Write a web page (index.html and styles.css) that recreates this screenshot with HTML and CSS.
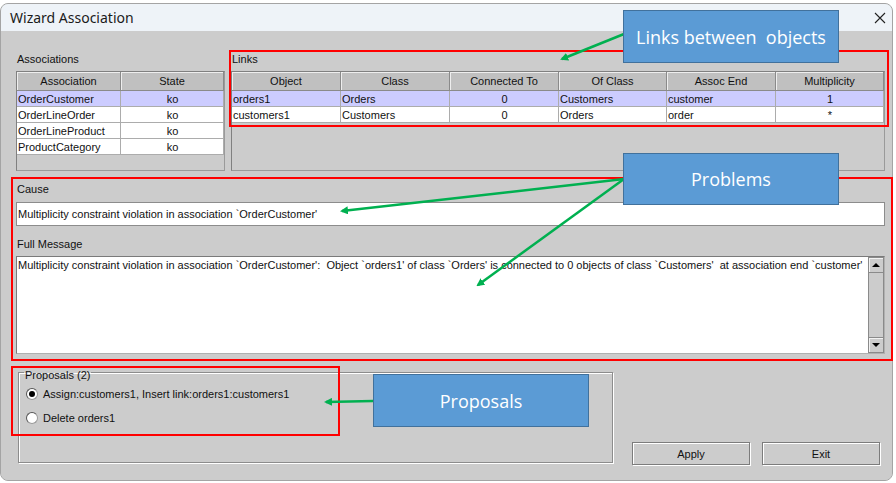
FILE: index.html
```html
<!DOCTYPE html>
<html>
<head>
<meta charset="utf-8">
<title>Wizard Association</title>
<link rel="stylesheet" href="styles.css">
</head>
<body>
<div class="window">
  <div class="titlebar">
    <span class="title">Wizard Association</span>
    <svg class="close" viewBox="0 0 12 12" width="12" height="12"><path d="M1 1 L11 11 M11 1 L1 11" stroke="#222" stroke-width="1.1" fill="none"/></svg>
  </div>
  <div class="content">
    <div class="top">
      <section class="panel">
        <div class="label">Associations</div>
        <div class="pane">
          <table class="grid">
            <colgroup><col style="width:104px"><col style="width:103px"></colgroup>
            <thead><tr><th>Association</th><th>State</th></tr></thead>
            <tbody>
              <tr class="sel"><td>OrderCustomer</td><td class="c">ko</td></tr>
              <tr><td>OrderLineOrder</td><td class="c">ko</td></tr>
              <tr><td>OrderLineProduct</td><td class="c">ko</td></tr>
              <tr><td>ProductCategory</td><td class="c">ko</td></tr>
            </tbody>
          </table>
        </div>
      </section>
      <section class="panel">
        <div class="label">Links</div>
        <div class="pane">
          <table class="grid">
            <colgroup><col style="width:109px"><col style="width:109px"><col style="width:109px"><col style="width:108px"><col style="width:109px"><col style="width:108px"></colgroup>
            <thead><tr><th>Object</th><th>Class</th><th>Connected To</th><th>Of Class</th><th>Assoc End</th><th>Multiplicity</th></tr></thead>
            <tbody>
              <tr class="sel"><td>orders1</td><td>Orders</td><td class="c">0</td><td>Customers</td><td>customer</td><td class="c">1</td></tr>
              <tr><td>customers1</td><td>Customers</td><td class="c">0</td><td>Orders</td><td>order</td><td class="c">*</td></tr>
            </tbody>
          </table>
        </div>
      </section>
    </div>

    <div class="label gap-label">Cause</div>
    <div class="field">Multiplicity constraint violation in association `OrderCustomer'</div>

    <div class="label gap-label">Full Message</div>
    <div class="textarea">
      <div class="msg">Multiplicity constraint violation in association `OrderCustomer':  Object `orders1' of class `Orders' is connected to 0 objects of class `Customers'  at association end `customer'</div>
      <div class="vscroll">
        <div class="sb-btn"><span class="tri up"></span></div>
        <div class="sb-track"></div>
        <div class="sb-btn"><span class="tri down"></span></div>
      </div>
    </div>

    <div class="bottom">
      <fieldset class="proposals">
        <legend>Proposals (2)</legend>
        <div class="radio first"><span class="dot on"></span>Assign:customers1, Insert link:orders1:customers1</div>
        <div class="radio"><span class="dot"></span>Delete orders1</div>
      </fieldset>
      <div class="buttons">
        <button class="btn">Apply</button>
        <button class="btn">Exit</button>
      </div>
    </div>
  </div>
</div>

<div class="mark mark-links"></div>
<div class="mark mark-problems"></div>
<div class="mark mark-proposals"></div>

<svg class="arrows" width="896" height="483" viewBox="0 0 896 483">
  <defs>
    <marker id="ah" markerWidth="8" markerHeight="8" refX="6" refY="4" orient="auto" markerUnits="userSpaceOnUse">
      <path d="M0 0 L8 4 L0 8 Z" fill="#00b050"/>
    </marker>
  </defs>
  <g stroke="#00b050" stroke-width="2.5" fill="none">
    <line x1="624" y1="34" x2="562" y2="59" marker-end="url(#ah)"/>
    <line x1="624" y1="179" x2="342" y2="211" marker-end="url(#ah)"/>
    <line x1="624" y1="179" x2="478" y2="285" marker-end="url(#ah)"/>
    <line x1="373" y1="401" x2="326" y2="402" marker-end="url(#ah)"/>
  </g>
</svg>

<div class="callout c-links">Links between&nbsp; objects</div>
<div class="callout c-problems">Problems</div>
<div class="callout c-proposals">Proposals</div>
</body>
</html>
```

FILE: styles.css
```css
* { box-sizing: border-box; }
html, body { margin: 0; padding: 0; }
body {
  width: 896px;
  height: 483px;
  position: relative;
  overflow: hidden;
  background: #ffffff;
  font-family: "Liberation Sans", Arial, sans-serif;
  font-size: 11px;
  color: #111;
}

.window {
  margin-top: 3px;
  width: 893px;
  height: 478px;
  border: 1px solid #a4a4a4;
  border-radius: 8px;
  overflow: hidden;
  display: flex;
  flex-direction: column;
  background: #cccccc;
}
.titlebar {
  flex: none;
  height: 27px;
  background: #eef3f8;
  display: flex;
  align-items: center;
  justify-content: space-between;
  padding: 0 6px 0 9px;
}
.title {
  font-family: "Noto Sans", "Open Sans", sans-serif;
  font-size: 14px;
  color: #1b1b1b;
}
.close { display: block; }

.content {
  flex: 1;
  background: #cccccc;
  padding: 21px 7px 0 15px;
}
.top {
  display: grid;
  grid-template-columns: 209px 654px;
  column-gap: 6px;
}
.label {
  height: 14px;
  line-height: 14px;
  padding-left: 1px;
}
.pane {
  margin-top: 5px;
  height: 100px;
  border: 1px solid #808080;
  border-right-color: #9a9a9a;
  border-bottom-color: #9a9a9a;
  background: #cccccc;
  overflow: hidden;
}

table.grid {
  border-collapse: separate;
  border-spacing: 0;
  table-layout: fixed;
  width: 100%;
}
.grid th {
  height: 19px;
  padding: 0;
  font-weight: normal;
  background: #c0c0c0;
  border-right: 1px solid #8a8a8a;
  border-bottom: 1px solid #8a8a8a;
  box-shadow: inset 1px 1px 0 #eeeeee;
  text-align: center;
  line-height: 18px;
  color: #111;
}
.grid td {
  height: 16px;
  padding: 1px 0 0 1px;
  line-height: 14px;
  background: #ffffff;
  border-right: 1px solid #acacac;
  border-bottom: 1px solid #acacac;
  white-space: nowrap;
  overflow: hidden;
}
.grid tr.sel td { background: #ccccff; }
.grid td.c { text-align: center; }

.gap-label { margin-top: 11px; }
.field {
  margin-top: 6px;
  height: 24px;
  border: 1px solid #8c8c8c;
  background: #ffffff;
  line-height: 22px;
  padding-left: 1px;
  white-space: pre;
}
.textarea {
  margin-top: 5px;
  height: 98px;
  border: 1px solid #7a7a7a;
  border-right-color: #b0b0b0;
  border-bottom-color: #b0b0b0;
  background: #ffffff;
  display: flex;
}
.msg {
  flex: 1;
  white-space: pre;
  overflow: hidden;
  padding: 1px 0 0 1px;
  line-height: 14px;
}
.vscroll {
  flex: none;
  width: 16px;
  display: flex;
  flex-direction: column;
  background: #cccccc;
}
.sb-btn {
  height: 16px;
  border: 1px solid #8a8a8a;
  box-shadow: inset 1px 1px 0 #f2f2f2;
  background: #cccccc;
  display: flex;
  align-items: center;
  justify-content: center;
}
.sb-track {
  flex: 1;
  border-left: 1px solid #8a8a8a;
  border-right: 1px solid #8a8a8a;
  background: #cccccc;
}
.tri {
  width: 0;
  height: 0;
  border-left: 4px solid transparent;
  border-right: 4px solid transparent;
}
.tri.up { border-bottom: 4px solid #000; }
.tri.down { border-top: 4px solid #000; }

.bottom {
  margin-top: 8px;
  display: flex;
  align-items: flex-start;
}
.proposals {
  margin: 0 0 0 2px;
  min-width: 0;
  width: 595px;
  height: 101px;
  padding: 0 0 0 5px;
  border: 1px solid #8c8c8c;
  box-shadow: 1px 1px 0 #ffffff, inset 1px 1px 0 #ffffff;
}
.proposals legend {
  padding: 6px 1px 0;
  line-height: 14px;
}
.radio {
  display: flex;
  align-items: center;
  height: 20px;
  margin-top: 4px;
}
.radio.first { margin-top: 2px; }
.dot {
  position: relative;
  width: 12px;
  height: 12px;
  margin: 0 5px 0 2px;
  border-radius: 50%;
  border: 1px solid #555;
  border-right-color: #9a9a9a;
  border-bottom-color: #9a9a9a;
  background: #ffffff;
}
.dot.on::after {
  content: "";
  position: absolute;
  left: 2px;
  top: 2px;
  width: 6px;
  height: 6px;
  border-radius: 50%;
  background: #000;
}
.buttons {
  margin: 80px 5px 0 auto;
  display: flex;
  gap: 12px;
}
.btn {
  width: 118px;
  height: 23px;
  padding: 0;
  font-family: "Liberation Sans", Arial, sans-serif;
  font-size: 11px;
  color: #111;
  background: #cccccc;
  border: 1px solid #7c7c7c;
  box-shadow: 1px 1px 0 #ffffff, inset 1px 1px 0 #ffffff;
}

/* annotations */
.mark {
  position: absolute;
  border: 2px solid #ff0000;
  pointer-events: none;
}
.mark-links { left: 229px; top: 50px; width: 660px; height: 77px; }
.mark-problems { left: 11px; top: 177px; width: 882px; height: 184px; }
.mark-proposals { left: 11px; top: 366px; width: 329px; height: 70px; }

.arrows {
  position: absolute;
  left: 0;
  top: 0;
  pointer-events: none;
}
.callout {
  position: absolute;
  width: 216px;
  height: 53px;
  background: #5b9bd5;
  border: 1px solid #41719c;
  color: #ffffff;
  font-family: "Open Sans", "Noto Sans", sans-serif;
  font-size: 18px;
  display: flex;
  align-items: center;
  justify-content: center;
}
.c-links { left: 623px; top: 10px; }
.c-problems { left: 623px; top: 153px; height: 52px; }
.c-proposals { left: 373px; top: 374px; }
```
